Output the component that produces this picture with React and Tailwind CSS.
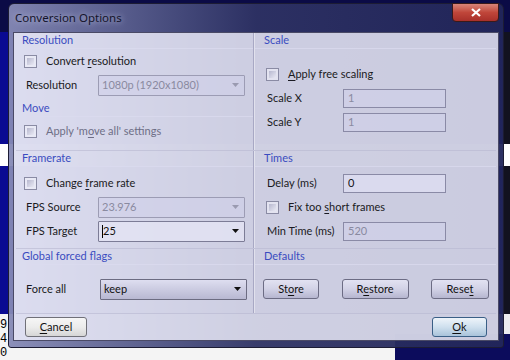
import React from "react";

const U = ({ children }) => <span className="underline underline-offset-2">{children}</span>;

function Check() {
  return (
    <span className="w-[13px] h-[13px] border border-[#8a8ba4] bg-[#f2f2fa]/60 p-[2px] shrink-0">
      <span className="block w-full h-full bg-linear-to-br from-[#b7b8cf] to-[#e9e9f4]" />
    </span>
  );
}

function Arrow({ dim }) {
  return (
    <svg width="7" height="4" viewBox="0 0 7 4" className="shrink-0">
      <polygon points="0,0 7,0 3.5,4" fill={dim ? "#9a9ab0" : "#111"} />
    </svg>
  );
}

function Header({ children, pl = "pl-[6px]" }) {
  return (
    <div className={`h-4 flex items-center ${pl} text-[#3a4cc0] border-b border-[#dcdcf0]/70`}>
      {children}
    </div>
  );
}

function CheckRow({ children, pl = "pl-[8px]", dim, className = "" }) {
  return (
    <div className={`h-6 flex items-center gap-[9px] ${pl} ${className}`}>
      <Check />
      <span className={dim ? "text-[#6e6e86]" : "text-[#1a1a22]"}>{children}</span>
    </div>
  );
}

function Combo({ value, dim, edit, button }) {
  const box = button
    ? "border-[#6c6c82] bg-linear-to-b from-[#dedef0] to-[#b8b8d2]"
    : edit
    ? "border-[#7c7c96] bg-[#e4e4f4]/80"
    : "border-[#9c9cb4] bg-[#d0d0ea]/50";
  return (
    <div className={`w-[147px] h-[21px] border rounded-[1px] flex items-center pl-[3px] pr-[5px] ${box}`}>
      {edit && <span className="w-px h-[13px] bg-black" />}
      <span className={`flex-1 ${dim ? "text-[#8a8aa0]" : "text-[#111]"}`}>{value}</span>
      <Arrow dim={dim} />
    </div>
  );
}

function Input({ value, dim, light }) {
  return (
    <div
      className={`w-[103px] h-[19px] border border-[#8a8aa6] flex items-center pl-[4px] ${
        light ? "bg-[#e0e0f4]/70" : "bg-[#d2d2ec]/50"
      } ${dim ? "text-[#8a8aa0]" : "text-[#111]"}`}
    >
      {value}
    </div>
  );
}

function Btn({ children, w, ok, plain }) {
  const style = ok
    ? "border-[#3a5f86] bg-linear-to-b from-[#eef4fa] via-[#cfe0ee] to-[#a9c3da]"
    : plain
    ? "border-[#707078] bg-linear-to-b from-[#f6f6f6] via-[#ececec] to-[#d6d6d6]"
    : "border-[#6c6c84] bg-linear-to-b from-[#e2e2f2] via-[#d2d2e6] to-[#b6b6d0]";
  return (
    <div className={`${w} h-[20px] border rounded-[3px] flex items-center justify-center text-[#111] ${style}`}>
      {children}
    </div>
  );
}

function Label({ children, w }) {
  return <span className={`${w} text-[#1a1a22] shrink-0`}>{children}</span>;
}

export default function App() {
  return (
    <div className="w-[510px] h-[360px] relative overflow-hidden flex flex-col bg-[#0b0b40] font-['Lato',sans-serif] text-[11px]">
      {/* desktop behind the dialog */}
      <div className="h-[33px] bg-[#0b0b46]" />
      <div className="h-[114px] flex">
        <div className="w-[502px] bg-[#0a0a92]" />
        <div className="flex-1 bg-[#121220]" />
      </div>
      <div className="h-[23px] bg-white" />
      <div className="h-[151px] flex">
        <div className="w-[502px] bg-[#0a0a92]" />
        <div className="flex-1 bg-[#121220]" />
      </div>
      <div className="flex-1 flex">
        <div className="w-[395px] bg-[#f4f4f4] flex flex-col font-['Liberation_Mono',monospace] text-[12px] leading-[14px] text-black pt-[4px]">
          <span>9</span>
          <span>4</span>
          <span>0</span>
        </div>
        <div className="flex-1 flex flex-col">
          <div className="h-[20px] bg-[#ececf0]" />
          <div className="flex-1 bg-[#0c0c5c]" />
        </div>
      </div>

      {/* dialog window */}
      <div className="absolute left-[8px] top-[3px] w-[496px] h-[345px] rounded-t-[6px] rounded-b-[3px] border border-[#1c1c34] bg-linear-to-r from-[#868ab6]/95 via-[#2e3264]/95 to-[#22265a]/95 flex flex-col px-[4px] pb-[6px]">
        <div className="h-[28px] flex items-center pl-[2px] relative">
          <span className="text-[11.5px] text-[#14142a] font-['Noto_Sans',sans-serif] [text-shadow:0_0_6px_#c8cce8]">
            Conversion Options
          </span>
          <div className="absolute right-[0px] -top-px w-[47px] h-[19px] rounded-b-[4px] border border-[#3a1a1a] bg-linear-to-b from-[#d88478] via-[#c0463a] to-[#a8302a] flex items-center justify-center">
            <svg width="10" height="9" viewBox="0 0 10 9">
              <path d="M1 1 L9 8 M9 1 L1 8" stroke="#fff" strokeWidth="2.2" />
            </svg>
          </div>
        </div>

        <div className="flex-1 border border-[#4a4a66] bg-[#f0f0fc]/[0.82] flex flex-col px-[1px]">
          <div className="mx-px border-b border-[#b8b8d0]/60 flex flex-col">
            {/* band 1 */}
            <div className="h-[117px] grid grid-cols-[238px_1fr]">
              <div className="border-r border-[#a8a8c4] flex flex-col">
                <Header>Resolution</Header>
                <CheckRow>
                  Convert <U>r</U>esolution
                </CheckRow>
                <div className="h-6 flex items-center pl-[10px]">
                  <Label w="w-[72px]">Resolution</Label>
                  <Combo value="1080p (1920x1080)" dim />
                </div>
                <div className="mt-[4px]">
                  <Header>Move</Header>
                </div>
                <CheckRow dim className="mt-[2px]">
                  Apply 'm<U>o</U>ve all' settings
                </CheckRow>
              </div>
              <div className="border-l border-white/40 flex flex-col">
                <Header pl="pl-[9px]">Scale</Header>
                <CheckRow pl="pl-[11px]" className="mt-[13px]">
                  <U>A</U>pply free scaling
                </CheckRow>
                <div className="h-6 flex items-center pl-[12px]">
                  <Label w="w-[76px]">Scale X</Label>
                  <Input value="1" dim />
                </div>
                <div className="h-6 flex items-center pl-[12px]">
                  <Label w="w-[76px]">Scale Y</Label>
                  <Input value="1" dim />
                </div>
              </div>
            </div>

            {/* band 2 */}
            <div className="h-[98px] grid grid-cols-[238px_1fr] border-t border-[#b8b8d0]/60">
              <div className="border-r border-[#a8a8c4] flex flex-col">
                <Header>Framerate</Header>
                <CheckRow className="mt-[4px]">
                  Change <U>f</U>rame rate
                </CheckRow>
                <div className="h-6 flex items-center pl-[10px]">
                  <Label w="w-[72px]">FPS Source</Label>
                  <Combo value="23.976" dim />
                </div>
                <div className="h-6 flex items-center pl-[10px]">
                  <Label w="w-[72px]">FPS Target</Label>
                  <Combo value="25" edit />
                </div>
              </div>
              <div className="border-l border-white/40 flex flex-col">
                <Header pl="pl-[9px]">Times</Header>
                <div className="h-6 flex items-center pl-[12px] mt-[4px]">
                  <Label w="w-[76px]">Delay (ms)</Label>
                  <Input value="0" light />
                </div>
                <CheckRow pl="pl-[11px]">
                  Fix too <U>s</U>hort frames
                </CheckRow>
                <div className="h-6 flex items-center pl-[12px]">
                  <Label w="w-[76px]">Min Time (ms)</Label>
                  <Input value="520" dim />
                </div>
              </div>
            </div>

            {/* band 3 */}
            <div className="h-[65px] grid grid-cols-[238px_1fr] border-t border-[#b8b8d0]/60">
              <div className="border-r border-[#a8a8c4] flex flex-col">
                <Header>Global forced flags</Header>
                <div className="h-6 flex items-center pl-[10px] mt-[12px]">
                  <Label w="w-[74px]">Force all</Label>
                  <Combo value="keep" button />
                </div>
              </div>
              <div className="border-l border-white/40 flex flex-col">
                <Header pl="pl-[9px]">Defaults</Header>
                <div className="h-6 flex items-center pl-[8px] pr-[7px] mt-[12px] justify-between">
                  <Btn w="w-[56px]">
                    St<U>o</U>re
                  </Btn>
                  <Btn w="w-[67px]">
                    R<U>e</U>store
                  </Btn>
                  <Btn w="w-[58px]">
                    Rese<U>t</U>
                  </Btn>
                </div>
              </div>
            </div>
          </div>

          {/* footer */}
          <div className="flex-1 flex items-center justify-between pl-[10px] pr-[10px]">
            <Btn w="w-[62px]" plain>
              <U>C</U>ancel
            </Btn>
            <Btn w="w-[55px]" ok>
              <U>O</U>k
            </Btn>
          </div>
        </div>
      </div>
    </div>
  );
}
